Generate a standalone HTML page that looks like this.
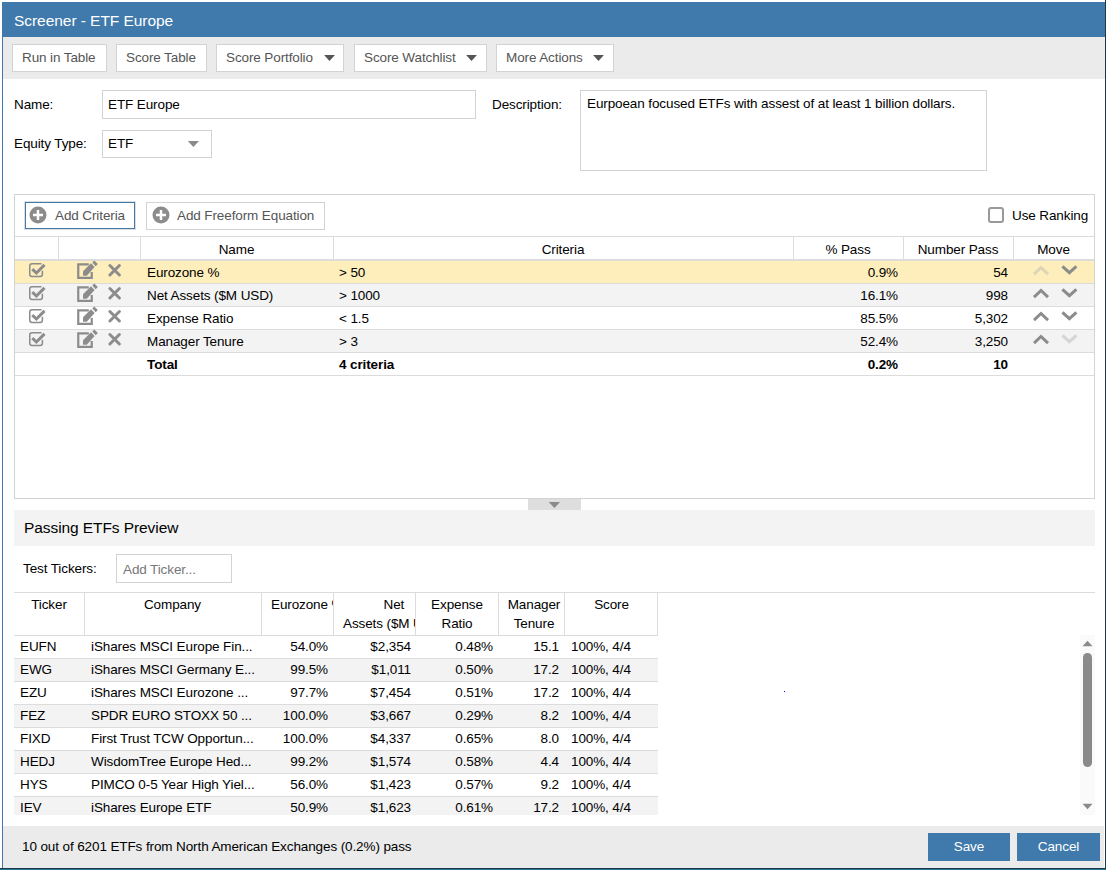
<!DOCTYPE html>
<html><head><meta charset="utf-8">
<style>
*{box-sizing:border-box;margin:0;padding:0}
html,body{width:1106px;height:870px;overflow:hidden;background:#fff;font-family:"Liberation Sans",sans-serif;font-size:13px;color:#000}
.a{position:absolute}
.t{position:absolute;white-space:nowrap}
.clip{position:absolute;overflow:hidden}
</style></head><body>
<div class="a" style="left:2px;top:2px;width:1103px;height:35px;background:#407aac"></div>
<div class="a" style="left:2px;top:37px;width:1px;height:832px;background:#407aac"></div>
<div class="a" style="left:1105px;top:0px;width:1px;height:870px;background:#1b3a46"></div>
<div class="a" style="left:0px;top:868px;width:1106px;height:1px;background:#1b3a46"></div>
<div class="a" style="left:0px;top:869px;width:1107px;height:1px;background:#2a7494"></div>
<div class="t" style="left:14px;top:12px;font-size:15px;line-height:17px;color:#fff;font-size:15.5px;letter-spacing:-0.05px">Screener - ETF Europe</div>
<div class="a" style="left:3px;top:37px;width:1102px;height:42px;background:#ebebeb"></div>
<div class="a" style="left:12px;top:44px;width:95px;height:28px;background:#fff;border:1px solid #d3d3d3"></div>
<div class="t" style="left:22px;top:50px;font-size:13.5px;line-height:15px;letter-spacing:-0.110px;color:#555">Run in Table</div>
<div class="a" style="left:116px;top:44px;width:91px;height:28px;background:#fff;border:1px solid #d3d3d3"></div>
<div class="t" style="left:126px;top:50px;font-size:13.5px;line-height:15px;letter-spacing:-0.110px;color:#555">Score Table</div>
<div class="a" style="left:216px;top:44px;width:128px;height:28px;background:#fff;border:1px solid #d3d3d3"></div>
<div class="t" style="left:226px;top:50px;font-size:13.5px;line-height:15px;letter-spacing:-0.110px;color:#555">Score Portfolio</div>
<svg class="a" style="left:323px;top:54px" width="13" height="8" viewBox="0 0 13 8"><path d="M1.10 1.10 H11.90 L6.50 7.00 Z" fill="#555"/></svg>
<div class="a" style="left:354px;top:44px;width:133px;height:28px;background:#fff;border:1px solid #d3d3d3"></div>
<div class="t" style="left:364px;top:50px;font-size:13.5px;line-height:15px;letter-spacing:-0.110px;color:#555">Score Watchlist</div>
<svg class="a" style="left:465px;top:54px" width="13" height="8" viewBox="0 0 13 8"><path d="M1.10 1.10 H11.90 L6.50 7.00 Z" fill="#555"/></svg>
<div class="a" style="left:496px;top:44px;width:118px;height:28px;background:#fff;border:1px solid #d3d3d3"></div>
<div class="t" style="left:506px;top:50px;font-size:13.5px;line-height:15px;letter-spacing:-0.110px;color:#555">More Actions</div>
<svg class="a" style="left:592px;top:54px" width="13" height="8" viewBox="0 0 13 8"><path d="M1.10 1.10 H11.90 L6.50 7.00 Z" fill="#555"/></svg>
<div class="t" style="left:14px;top:97px;font-size:13.5px;line-height:15px;letter-spacing:-0.110px;">Name:</div>
<div class="a" style="left:102px;top:90px;width:374px;height:29px;background:#fff;border:1px solid #d3d3d3"></div>
<div class="t" style="left:108px;top:97px;font-size:13.5px;line-height:15px;letter-spacing:-0.110px;">ETF Europe</div>
<div class="t" style="left:492px;top:97px;font-size:13.5px;line-height:15px;letter-spacing:-0.110px;">Description:</div>
<div class="a" style="left:580px;top:90px;width:407px;height:81px;background:#fff;border:1px solid #d3d3d3"></div>
<div class="t" style="left:587px;top:96px;font-size:13.5px;line-height:15px;letter-spacing:-0.110px;">Eurpoean focused ETFs with assest of at least 1 billion dollars.</div>
<div class="t" style="left:14px;top:136px;font-size:13.5px;line-height:15px;letter-spacing:-0.110px;">Equity Type:</div>
<div class="a" style="left:102px;top:130px;width:110px;height:28px;background:#fff;border:1px solid #d3d3d3"></div>
<div class="t" style="left:108px;top:136px;font-size:13.5px;line-height:15px;letter-spacing:-0.110px;">ETF</div>
<svg class="a" style="left:186px;top:140px" width="14" height="9" viewBox="0 0 14 9"><path d="M1.80 1.00 H13.00 L7.40 7.00 Z" fill="#8a8a8a"/></svg>
<div class="a" style="left:14px;top:194px;width:1081px;height:305px;border:1px solid #d3d3d3"></div>
<div class="a" style="left:24px;top:201px;width:112px;height:29px;border:1px solid #dedede"></div>
<div class="a" style="left:25px;top:202px;width:110px;height:27px;background:#fff;border:1px solid #407aac"></div>
<svg class="a" style="left:29px;top:206px" width="18" height="18" viewBox="0 0 18 18"><circle cx="9" cy="9" r="8.5" fill="#8c8c8c"/><rect x="4" y="7.75" width="10" height="2.5" fill="#fff"/><rect x="7.75" y="4" width="2.5" height="10" fill="#fff"/></svg>
<div class="t" style="left:55px;top:208px;font-size:13.5px;line-height:15px;letter-spacing:-0.110px;color:#555">Add Criteria</div>
<div class="a" style="left:146px;top:202px;width:179px;height:28px;background:#fff;border:1px solid #d3d3d3"></div>
<svg class="a" style="left:151.5px;top:206px" width="18" height="18" viewBox="0 0 18 18"><circle cx="9" cy="9" r="8.5" fill="#8c8c8c"/><rect x="4" y="7.75" width="10" height="2.5" fill="#fff"/><rect x="7.75" y="4" width="2.5" height="10" fill="#fff"/></svg>
<div class="t" style="left:177px;top:208px;font-size:13.5px;line-height:15px;letter-spacing:-0.110px;color:#555">Add Freeform Equation</div>
<div class="a" style="left:988px;top:207px;width:16px;height:16px;border:2px solid #999;border-radius:3px"></div>
<div class="t" style="left:1012px;top:208px;font-size:13.5px;line-height:15px;letter-spacing:-0.110px;">Use Ranking</div>
<div class="a" style="left:15px;top:236px;width:1079px;height:1px;background:#dcdcdc"></div>
<div class="a" style="left:15px;top:259px;width:1079px;height:2px;background:#dcdcdc"></div>
<div class="a" style="left:58px;top:237px;width:1px;height:22px;background:#dcdcdc"></div>
<div class="a" style="left:140px;top:237px;width:1px;height:22px;background:#dcdcdc"></div>
<div class="a" style="left:333px;top:237px;width:1px;height:22px;background:#dcdcdc"></div>
<div class="a" style="left:793px;top:237px;width:1px;height:22px;background:#dcdcdc"></div>
<div class="a" style="left:903px;top:237px;width:1px;height:22px;background:#dcdcdc"></div>
<div class="a" style="left:1013px;top:237px;width:1px;height:22px;background:#dcdcdc"></div>
<div class="t" style="left:140px;width:193px;text-align:center;top:242px;font-size:13.5px;line-height:15px;letter-spacing:-0.110px;">Name</div>
<div class="t" style="left:333px;width:460px;text-align:center;top:242px;font-size:13.5px;line-height:15px;letter-spacing:-0.110px;">Criteria</div>
<div class="t" style="left:793px;width:110px;text-align:center;top:242px;font-size:13.5px;line-height:15px;letter-spacing:-0.110px;">% Pass</div>
<div class="t" style="left:903px;width:110px;text-align:center;top:242px;font-size:13.5px;line-height:15px;letter-spacing:-0.110px;">Number Pass</div>
<div class="t" style="left:1013px;width:81px;text-align:center;top:242px;font-size:13.5px;line-height:15px;letter-spacing:-0.110px;">Move</div>
<div class="a" style="left:15px;top:261px;width:1079px;height:22px;background:#feeebb"></div>
<div class="a" style="left:15px;top:283px;width:1079px;height:1px;background:#dcdcdc"></div>
<svg class="a" style="left:24px;top:258px" width="28" height="24" viewBox="0 0 28 24"><path d="M17.5 5.75 H8 Q5.75 5.75 5.75 8 V16.2 Q5.75 18.4 8 18.4 H16.2 Q18.4 18.4 18.4 16.2 V12.8" fill="none" stroke="#8c8c8c" stroke-width="1.5"/><path d="M8.3 11.1 L12.4 15.0 L20.5 6.9" fill="none" stroke="#8c8c8c" stroke-width="3"/></svg>
<svg class="a" style="left:72px;top:258px" width="28" height="24" viewBox="0 0 28 24"><path d="M16.8 6.4 H6.25 V19.9 H19.75 V14" fill="none" stroke="#8c8c8c" stroke-width="2.2"/><path d="M11 13.2 L19 5.3 L22.6 8.9 L14.8 17.8 L11 17.8 Z" fill="#8c8c8c"/><path d="M20.3 4.6 L22.3 2.6 L25.8 6.1 L23.7 8.3 Z" fill="#8c8c8c"/></svg>
<svg class="a" style="left:102px;top:258px" width="28" height="24" viewBox="0 0 28 24"><path d="M7.9 7.5 L17.4 17 M17.4 7.5 L7.9 17" stroke="#8c8c8c" stroke-width="3" stroke-linecap="round"/></svg>
<div class="t" style="left:147px;top:265px;font-size:13.5px;line-height:15px;letter-spacing:-0.110px;">Eurozone %</div>
<div class="t" style="left:339px;top:265px;font-size:13.5px;line-height:15px;letter-spacing:-0.110px;">&gt; 50</div>
<div class="t" style="right:208px;top:265px;font-size:13.5px;line-height:15px;letter-spacing:-0.110px;">0.9%</div>
<div class="t" style="right:98px;top:265px;font-size:13.5px;line-height:15px;letter-spacing:-0.110px;">54</div>
<svg class="a" style="left:1028px;top:259px" width="56" height="24" viewBox="0 0 56 24"><path d="M6 15.1 L13 8.5 L20 15.1" fill="none" stroke="#ddd5b8" stroke-width="3"/><path d="M34.4 7.3 L41.4 13.7 L48.4 7.3" fill="none" stroke="#8c8c8c" stroke-width="3"/></svg>
<div class="a" style="left:15px;top:284px;width:1079px;height:22px;background:#f3f3f3"></div>
<div class="a" style="left:15px;top:306px;width:1079px;height:1px;background:#dcdcdc"></div>
<svg class="a" style="left:24px;top:281px" width="28" height="24" viewBox="0 0 28 24"><path d="M17.5 5.75 H8 Q5.75 5.75 5.75 8 V16.2 Q5.75 18.4 8 18.4 H16.2 Q18.4 18.4 18.4 16.2 V12.8" fill="none" stroke="#8c8c8c" stroke-width="1.5"/><path d="M8.3 11.1 L12.4 15.0 L20.5 6.9" fill="none" stroke="#8c8c8c" stroke-width="3"/></svg>
<svg class="a" style="left:72px;top:281px" width="28" height="24" viewBox="0 0 28 24"><path d="M16.8 6.4 H6.25 V19.9 H19.75 V14" fill="none" stroke="#8c8c8c" stroke-width="2.2"/><path d="M11 13.2 L19 5.3 L22.6 8.9 L14.8 17.8 L11 17.8 Z" fill="#8c8c8c"/><path d="M20.3 4.6 L22.3 2.6 L25.8 6.1 L23.7 8.3 Z" fill="#8c8c8c"/></svg>
<svg class="a" style="left:102px;top:281px" width="28" height="24" viewBox="0 0 28 24"><path d="M7.9 7.5 L17.4 17 M17.4 7.5 L7.9 17" stroke="#8c8c8c" stroke-width="3" stroke-linecap="round"/></svg>
<div class="t" style="left:147px;top:288px;font-size:13.5px;line-height:15px;letter-spacing:-0.110px;">Net Assets ($M USD)</div>
<div class="t" style="left:339px;top:288px;font-size:13.5px;line-height:15px;letter-spacing:-0.110px;">&gt; 1000</div>
<div class="t" style="right:208px;top:288px;font-size:13.5px;line-height:15px;letter-spacing:-0.110px;">16.1%</div>
<div class="t" style="right:98px;top:288px;font-size:13.5px;line-height:15px;letter-spacing:-0.110px;">998</div>
<svg class="a" style="left:1028px;top:282px" width="56" height="24" viewBox="0 0 56 24"><path d="M6 15.1 L13 8.5 L20 15.1" fill="none" stroke="#8c8c8c" stroke-width="3"/><path d="M34.4 7.3 L41.4 13.7 L48.4 7.3" fill="none" stroke="#8c8c8c" stroke-width="3"/></svg>
<div class="a" style="left:15px;top:307px;width:1079px;height:22px;background:#fff"></div>
<div class="a" style="left:15px;top:329px;width:1079px;height:1px;background:#dcdcdc"></div>
<svg class="a" style="left:24px;top:304px" width="28" height="24" viewBox="0 0 28 24"><path d="M17.5 5.75 H8 Q5.75 5.75 5.75 8 V16.2 Q5.75 18.4 8 18.4 H16.2 Q18.4 18.4 18.4 16.2 V12.8" fill="none" stroke="#8c8c8c" stroke-width="1.5"/><path d="M8.3 11.1 L12.4 15.0 L20.5 6.9" fill="none" stroke="#8c8c8c" stroke-width="3"/></svg>
<svg class="a" style="left:72px;top:304px" width="28" height="24" viewBox="0 0 28 24"><path d="M16.8 6.4 H6.25 V19.9 H19.75 V14" fill="none" stroke="#8c8c8c" stroke-width="2.2"/><path d="M11 13.2 L19 5.3 L22.6 8.9 L14.8 17.8 L11 17.8 Z" fill="#8c8c8c"/><path d="M20.3 4.6 L22.3 2.6 L25.8 6.1 L23.7 8.3 Z" fill="#8c8c8c"/></svg>
<svg class="a" style="left:102px;top:304px" width="28" height="24" viewBox="0 0 28 24"><path d="M7.9 7.5 L17.4 17 M17.4 7.5 L7.9 17" stroke="#8c8c8c" stroke-width="3" stroke-linecap="round"/></svg>
<div class="t" style="left:147px;top:311px;font-size:13.5px;line-height:15px;letter-spacing:-0.110px;">Expense Ratio</div>
<div class="t" style="left:339px;top:311px;font-size:13.5px;line-height:15px;letter-spacing:-0.110px;">&lt; 1.5</div>
<div class="t" style="right:208px;top:311px;font-size:13.5px;line-height:15px;letter-spacing:-0.110px;">85.5%</div>
<div class="t" style="right:98px;top:311px;font-size:13.5px;line-height:15px;letter-spacing:-0.110px;">5,302</div>
<svg class="a" style="left:1028px;top:305px" width="56" height="24" viewBox="0 0 56 24"><path d="M6 15.1 L13 8.5 L20 15.1" fill="none" stroke="#8c8c8c" stroke-width="3"/><path d="M34.4 7.3 L41.4 13.7 L48.4 7.3" fill="none" stroke="#8c8c8c" stroke-width="3"/></svg>
<div class="a" style="left:15px;top:330px;width:1079px;height:22px;background:#f3f3f3"></div>
<div class="a" style="left:15px;top:352px;width:1079px;height:1px;background:#dcdcdc"></div>
<svg class="a" style="left:24px;top:327px" width="28" height="24" viewBox="0 0 28 24"><path d="M17.5 5.75 H8 Q5.75 5.75 5.75 8 V16.2 Q5.75 18.4 8 18.4 H16.2 Q18.4 18.4 18.4 16.2 V12.8" fill="none" stroke="#8c8c8c" stroke-width="1.5"/><path d="M8.3 11.1 L12.4 15.0 L20.5 6.9" fill="none" stroke="#8c8c8c" stroke-width="3"/></svg>
<svg class="a" style="left:72px;top:327px" width="28" height="24" viewBox="0 0 28 24"><path d="M16.8 6.4 H6.25 V19.9 H19.75 V14" fill="none" stroke="#8c8c8c" stroke-width="2.2"/><path d="M11 13.2 L19 5.3 L22.6 8.9 L14.8 17.8 L11 17.8 Z" fill="#8c8c8c"/><path d="M20.3 4.6 L22.3 2.6 L25.8 6.1 L23.7 8.3 Z" fill="#8c8c8c"/></svg>
<svg class="a" style="left:102px;top:327px" width="28" height="24" viewBox="0 0 28 24"><path d="M7.9 7.5 L17.4 17 M17.4 7.5 L7.9 17" stroke="#8c8c8c" stroke-width="3" stroke-linecap="round"/></svg>
<div class="t" style="left:147px;top:334px;font-size:13.5px;line-height:15px;letter-spacing:-0.110px;">Manager Tenure</div>
<div class="t" style="left:339px;top:334px;font-size:13.5px;line-height:15px;letter-spacing:-0.110px;">&gt; 3</div>
<div class="t" style="right:208px;top:334px;font-size:13.5px;line-height:15px;letter-spacing:-0.110px;">52.4%</div>
<div class="t" style="right:98px;top:334px;font-size:13.5px;line-height:15px;letter-spacing:-0.110px;">3,250</div>
<svg class="a" style="left:1028px;top:328px" width="56" height="24" viewBox="0 0 56 24"><path d="M6 15.1 L13 8.5 L20 15.1" fill="none" stroke="#8c8c8c" stroke-width="3"/><path d="M34.4 7.3 L41.4 13.7 L48.4 7.3" fill="none" stroke="#d5d5d5" stroke-width="3"/></svg>
<div class="a" style="left:15px;top:375px;width:1079px;height:1px;background:#dcdcdc"></div>
<div class="t" style="left:147px;top:357px;font-size:13.5px;line-height:15px;letter-spacing:-0.110px;font-weight:bold">Total</div>
<div class="t" style="left:339px;top:357px;font-size:13.5px;line-height:15px;letter-spacing:-0.110px;font-weight:bold">4 criteria</div>
<div class="t" style="right:208px;top:357px;font-size:13.5px;line-height:15px;letter-spacing:-0.110px;font-weight:bold">0.2%</div>
<div class="t" style="right:98px;top:357px;font-size:13.5px;line-height:15px;letter-spacing:-0.110px;font-weight:bold">10</div>
<div class="a" style="left:528px;top:499px;width:53px;height:11px;background:#dedede"></div>
<svg class="a" style="left:547px;top:501px" width="14" height="9" viewBox="0 0 14 9"><path d="M1.70 1.00 H13.10 L7.40 7.00 Z" fill="#8a8a8a"/></svg>
<div class="a" style="left:14px;top:510px;width:1081px;height:36px;background:#f3f3f3"></div>
<div class="t" style="left:24px;top:519px;font-size:15px;line-height:17px;font-size:15.5px;letter-spacing:-0.08px">Passing ETFs Preview</div>
<div class="t" style="left:23px;top:561px;font-size:13.5px;line-height:15px;letter-spacing:-0.110px;">Test Tickers:</div>
<div class="a" style="left:116px;top:554px;width:116px;height:29px;background:#fff;border:1px solid #d3d3d3"></div>
<div class="t" style="left:123px;top:562px;font-size:13.5px;line-height:15px;letter-spacing:-0.110px;color:#777">Add Ticker...</div>
<div class="a" style="left:14px;top:592px;width:1081px;height:1px;background:#dcdcdc"></div>
<div class="a" style="left:14px;top:635px;width:644px;height:1px;background:#dcdcdc"></div>
<div class="a" style="left:84px;top:593px;width:1px;height:42px;background:#dcdcdc"></div>
<div class="a" style="left:261px;top:593px;width:1px;height:42px;background:#dcdcdc"></div>
<div class="a" style="left:333px;top:593px;width:1px;height:42px;background:#dcdcdc"></div>
<div class="a" style="left:415px;top:593px;width:1px;height:42px;background:#dcdcdc"></div>
<div class="a" style="left:498px;top:593px;width:1px;height:42px;background:#dcdcdc"></div>
<div class="a" style="left:564px;top:593px;width:1px;height:42px;background:#dcdcdc"></div>
<div class="a" style="left:657px;top:593px;width:1px;height:42px;background:#dcdcdc"></div>
<div class="t" style="left:14px;width:70px;text-align:center;top:597px;font-size:13.5px;line-height:15px;letter-spacing:-0.110px;">Ticker</div>
<div class="t" style="left:84px;width:177px;text-align:center;top:597px;font-size:13.5px;line-height:15px;letter-spacing:-0.110px;">Company</div>
<div class="clip" style="left:262px;top:593px;width:71px;height:42px"><div class="t" style="left:9px;top:4px;font-size:13.5px;line-height:15px;letter-spacing:-0.110px;">Eurozone %</div></div>
<div class="clip" style="left:334px;top:593px;width:81px;height:42px"><div class="t" style="left:49.5px;top:4px;font-size:13.5px;line-height:15px;letter-spacing:-0.110px;">Net</div><div class="t" style="left:9px;top:23px;font-size:13.5px;line-height:15px;letter-spacing:-0.110px;">Assets ($M USD)</div></div>
<div class="t" style="left:415.5px;width:83.0px;text-align:center;top:597px;font-size:13.5px;line-height:15px;letter-spacing:-0.110px;">Expense</div>
<div class="t" style="left:415.5px;width:83.0px;text-align:center;top:616px;font-size:13.5px;line-height:15px;letter-spacing:-0.110px;">Ratio</div>
<div class="t" style="left:501px;width:66px;text-align:center;top:597px;font-size:13.5px;line-height:15px;letter-spacing:-0.110px;">Manager</div>
<div class="t" style="left:501px;width:66px;text-align:center;top:616px;font-size:13.5px;line-height:15px;letter-spacing:-0.110px;">Tenure</div>
<div class="t" style="left:565px;width:93px;text-align:center;top:597px;font-size:13.5px;line-height:15px;letter-spacing:-0.110px;">Score</div>
<div class="clip" style="left:0;top:636px;width:1106px;height:179px">
<div class="a" style="left:14px;top:22px;width:644px;height:1px;background:#dcdcdc"></div>
<div class="t" style="left:20px;top:3px;font-size:13.5px;line-height:15px;letter-spacing:-0.110px;">EUFN</div>
<div class="t" style="left:91px;top:3px;font-size:13.5px;line-height:15px;letter-spacing:-0.110px;">iShares MSCI Europe Fin...</div>
<div class="t" style="right:778px;top:3px;font-size:13.5px;line-height:15px;letter-spacing:-0.110px;">54.0%</div>
<div class="t" style="right:695px;top:3px;font-size:13.5px;line-height:15px;letter-spacing:-0.110px;">$2,354</div>
<div class="t" style="right:613px;top:3px;font-size:13.5px;line-height:15px;letter-spacing:-0.110px;">0.48%</div>
<div class="t" style="right:547px;top:3px;font-size:13.5px;line-height:15px;letter-spacing:-0.110px;">15.1</div>
<div class="t" style="left:571px;top:3px;font-size:13.5px;line-height:15px;letter-spacing:-0.110px;">100%, 4/4</div>
<div class="a" style="left:14px;top:23px;width:644px;height:22px;background:#f3f3f3"></div>
<div class="a" style="left:14px;top:45px;width:644px;height:1px;background:#dcdcdc"></div>
<div class="t" style="left:20px;top:26px;font-size:13.5px;line-height:15px;letter-spacing:-0.110px;">EWG</div>
<div class="t" style="left:91px;top:26px;font-size:13.5px;line-height:15px;letter-spacing:-0.110px;">iShares MSCI Germany E...</div>
<div class="t" style="right:778px;top:26px;font-size:13.5px;line-height:15px;letter-spacing:-0.110px;">99.5%</div>
<div class="t" style="right:695px;top:26px;font-size:13.5px;line-height:15px;letter-spacing:-0.110px;">$1,011</div>
<div class="t" style="right:613px;top:26px;font-size:13.5px;line-height:15px;letter-spacing:-0.110px;">0.50%</div>
<div class="t" style="right:547px;top:26px;font-size:13.5px;line-height:15px;letter-spacing:-0.110px;">17.2</div>
<div class="t" style="left:571px;top:26px;font-size:13.5px;line-height:15px;letter-spacing:-0.110px;">100%, 4/4</div>
<div class="a" style="left:14px;top:68px;width:644px;height:1px;background:#dcdcdc"></div>
<div class="t" style="left:20px;top:49px;font-size:13.5px;line-height:15px;letter-spacing:-0.110px;">EZU</div>
<div class="t" style="left:91px;top:49px;font-size:13.5px;line-height:15px;letter-spacing:-0.110px;">iShares MSCI Eurozone ...</div>
<div class="t" style="right:778px;top:49px;font-size:13.5px;line-height:15px;letter-spacing:-0.110px;">97.7%</div>
<div class="t" style="right:695px;top:49px;font-size:13.5px;line-height:15px;letter-spacing:-0.110px;">$7,454</div>
<div class="t" style="right:613px;top:49px;font-size:13.5px;line-height:15px;letter-spacing:-0.110px;">0.51%</div>
<div class="t" style="right:547px;top:49px;font-size:13.5px;line-height:15px;letter-spacing:-0.110px;">17.2</div>
<div class="t" style="left:571px;top:49px;font-size:13.5px;line-height:15px;letter-spacing:-0.110px;">100%, 4/4</div>
<div class="a" style="left:14px;top:69px;width:644px;height:22px;background:#f3f3f3"></div>
<div class="a" style="left:14px;top:91px;width:644px;height:1px;background:#dcdcdc"></div>
<div class="t" style="left:20px;top:72px;font-size:13.5px;line-height:15px;letter-spacing:-0.110px;">FEZ</div>
<div class="t" style="left:91px;top:72px;font-size:13.5px;line-height:15px;letter-spacing:-0.110px;">SPDR EURO STOXX 50 ...</div>
<div class="t" style="right:778px;top:72px;font-size:13.5px;line-height:15px;letter-spacing:-0.110px;">100.0%</div>
<div class="t" style="right:695px;top:72px;font-size:13.5px;line-height:15px;letter-spacing:-0.110px;">$3,667</div>
<div class="t" style="right:613px;top:72px;font-size:13.5px;line-height:15px;letter-spacing:-0.110px;">0.29%</div>
<div class="t" style="right:547px;top:72px;font-size:13.5px;line-height:15px;letter-spacing:-0.110px;">8.2</div>
<div class="t" style="left:571px;top:72px;font-size:13.5px;line-height:15px;letter-spacing:-0.110px;">100%, 4/4</div>
<div class="a" style="left:14px;top:114px;width:644px;height:1px;background:#dcdcdc"></div>
<div class="t" style="left:20px;top:95px;font-size:13.5px;line-height:15px;letter-spacing:-0.110px;">FIXD</div>
<div class="t" style="left:91px;top:95px;font-size:13.5px;line-height:15px;letter-spacing:-0.110px;">First Trust TCW Opportun...</div>
<div class="t" style="right:778px;top:95px;font-size:13.5px;line-height:15px;letter-spacing:-0.110px;">100.0%</div>
<div class="t" style="right:695px;top:95px;font-size:13.5px;line-height:15px;letter-spacing:-0.110px;">$4,337</div>
<div class="t" style="right:613px;top:95px;font-size:13.5px;line-height:15px;letter-spacing:-0.110px;">0.65%</div>
<div class="t" style="right:547px;top:95px;font-size:13.5px;line-height:15px;letter-spacing:-0.110px;">8.0</div>
<div class="t" style="left:571px;top:95px;font-size:13.5px;line-height:15px;letter-spacing:-0.110px;">100%, 4/4</div>
<div class="a" style="left:14px;top:115px;width:644px;height:22px;background:#f3f3f3"></div>
<div class="a" style="left:14px;top:137px;width:644px;height:1px;background:#dcdcdc"></div>
<div class="t" style="left:20px;top:118px;font-size:13.5px;line-height:15px;letter-spacing:-0.110px;">HEDJ</div>
<div class="t" style="left:91px;top:118px;font-size:13.5px;line-height:15px;letter-spacing:-0.110px;">WisdomTree Europe Hed...</div>
<div class="t" style="right:778px;top:118px;font-size:13.5px;line-height:15px;letter-spacing:-0.110px;">99.2%</div>
<div class="t" style="right:695px;top:118px;font-size:13.5px;line-height:15px;letter-spacing:-0.110px;">$1,574</div>
<div class="t" style="right:613px;top:118px;font-size:13.5px;line-height:15px;letter-spacing:-0.110px;">0.58%</div>
<div class="t" style="right:547px;top:118px;font-size:13.5px;line-height:15px;letter-spacing:-0.110px;">4.4</div>
<div class="t" style="left:571px;top:118px;font-size:13.5px;line-height:15px;letter-spacing:-0.110px;">100%, 4/4</div>
<div class="a" style="left:14px;top:160px;width:644px;height:1px;background:#dcdcdc"></div>
<div class="t" style="left:20px;top:141px;font-size:13.5px;line-height:15px;letter-spacing:-0.110px;">HYS</div>
<div class="t" style="left:91px;top:141px;font-size:13.5px;line-height:15px;letter-spacing:-0.110px;">PIMCO 0-5 Year High Yiel...</div>
<div class="t" style="right:778px;top:141px;font-size:13.5px;line-height:15px;letter-spacing:-0.110px;">56.0%</div>
<div class="t" style="right:695px;top:141px;font-size:13.5px;line-height:15px;letter-spacing:-0.110px;">$1,423</div>
<div class="t" style="right:613px;top:141px;font-size:13.5px;line-height:15px;letter-spacing:-0.110px;">0.57%</div>
<div class="t" style="right:547px;top:141px;font-size:13.5px;line-height:15px;letter-spacing:-0.110px;">9.2</div>
<div class="t" style="left:571px;top:141px;font-size:13.5px;line-height:15px;letter-spacing:-0.110px;">100%, 4/4</div>
<div class="a" style="left:14px;top:161px;width:644px;height:22px;background:#f3f3f3"></div>
<div class="a" style="left:14px;top:183px;width:644px;height:1px;background:#dcdcdc"></div>
<div class="t" style="left:20px;top:164px;font-size:13.5px;line-height:15px;letter-spacing:-0.110px;">IEV</div>
<div class="t" style="left:91px;top:164px;font-size:13.5px;line-height:15px;letter-spacing:-0.110px;">iShares Europe ETF</div>
<div class="t" style="right:778px;top:164px;font-size:13.5px;line-height:15px;letter-spacing:-0.110px;">50.9%</div>
<div class="t" style="right:695px;top:164px;font-size:13.5px;line-height:15px;letter-spacing:-0.110px;">$1,623</div>
<div class="t" style="right:613px;top:164px;font-size:13.5px;line-height:15px;letter-spacing:-0.110px;">0.61%</div>
<div class="t" style="right:547px;top:164px;font-size:13.5px;line-height:15px;letter-spacing:-0.110px;">17.2</div>
<div class="t" style="left:571px;top:164px;font-size:13.5px;line-height:15px;letter-spacing:-0.110px;">100%, 4/4</div>
</div>
<div class="a" style="left:1080px;top:635px;width:15px;height:180px;background:#fafafa"></div>
<svg class="a" style="left:1080px;top:636px" width="15" height="180" viewBox="0 0 15 180"><path d="M2.5 10.3 H12.5 L7.5 4.8 Z" fill="#8a8a8a"/><path d="M2.5 167.8 H12.5 L7.5 173.2 Z" fill="#8a8a8a"/></svg>
<div class="a" style="left:1083px;top:653px;width:9px;height:114px;background:#8a8a8a;border-radius:4.5px"></div>
<div class="a" style="left:784px;top:691px;width:1px;height:1px;background:#00f"></div>
<div class="a" style="left:3px;top:826px;width:1101px;height:42px;background:#ebebeb"></div>
<div class="t" style="left:22px;top:839px;font-size:13.5px;line-height:15px;letter-spacing:-0.110px;">10 out of 6201 ETFs from North American Exchanges (0.2%) pass</div>
<div class="a" style="left:928px;top:833px;width:82px;height:28px;background:#407aac"></div>
<div class="t" style="left:928px;width:82px;text-align:center;top:839px;font-size:13.5px;line-height:15px;letter-spacing:-0.110px;color:#fff">Save</div>
<div class="a" style="left:1017px;top:833px;width:83px;height:28px;background:#407aac"></div>
<div class="t" style="left:1017px;width:83px;text-align:center;top:839px;font-size:13.5px;line-height:15px;letter-spacing:-0.110px;color:#fff">Cancel</div>
</body></html>
